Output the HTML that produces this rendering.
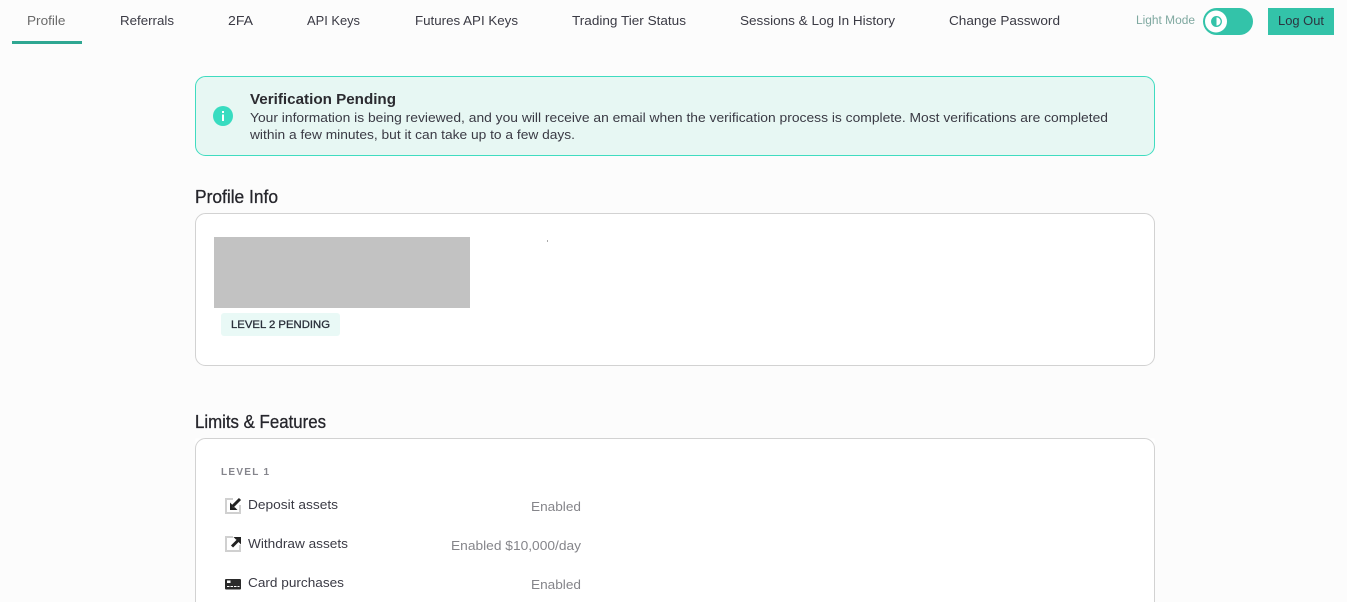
<!DOCTYPE html>
<html lang="en">
<head>
<meta charset="utf-8">
<title>Profile</title>
<style>
html,body{margin:0;padding:0;background:#fcfcfc;width:1347px;height:602px;overflow:hidden}
svg{position:absolute;left:0;top:0;display:block}
text{font-family:"Liberation Sans",sans-serif;fill:#3a3a44}
</style>
</head>
<body>
<svg width="1347" height="602" viewBox="0 0 1347 602" xmlns="http://www.w3.org/2000/svg">
<rect width="1347" height="602" fill="#fcfcfc"/>
<!-- nav -->
<g font-size="13">
<text x="27" y="25" textLength="38.500" lengthAdjust="spacingAndGlyphs" style="fill:#6a6a6a">Profile</text>
<text x="120" y="25" textLength="54" lengthAdjust="spacingAndGlyphs">Referrals</text>
<text x="228" y="25" textLength="25" lengthAdjust="spacingAndGlyphs">2FA</text>
<text x="307" y="25" textLength="53" lengthAdjust="spacingAndGlyphs">API Keys</text>
<text x="415" y="25" textLength="103" lengthAdjust="spacingAndGlyphs">Futures API Keys</text>
<text x="572" y="25" textLength="114" lengthAdjust="spacingAndGlyphs">Trading Tier Status</text>
<text x="740" y="25" textLength="155" lengthAdjust="spacingAndGlyphs">Sessions &amp; Log In History</text>
<text x="949" y="25" textLength="111" lengthAdjust="spacingAndGlyphs">Change Password</text>
</g>
<rect x="12" y="41" width="70" height="3" fill="#2fa792"/>
<text x="1136" y="24" font-size="11.500" textLength="59" lengthAdjust="spacingAndGlyphs" style="fill:#7fa8a0">Light Mode</text>
<rect x="1203" y="8" width="50" height="27" rx="13.500" fill="#33c3a9"/>
<circle cx="1216" cy="21.500" r="11" fill="#fff"/>
<circle cx="1216.500" cy="21.500" r="4.800" fill="#fff" stroke="#33c3a9" stroke-width="1.300"/>
<path d="M1216.500 16.700a4.800 4.800 0 0 0 0 9.600z" fill="#33c3a9"/>
<rect x="1268" y="8" width="66" height="27" fill="#33c3a9"/>
<text x="1278" y="25" font-size="13" textLength="46" lengthAdjust="spacingAndGlyphs" style="fill:#2c3440">Log Out</text>
<!-- alert -->
<rect x="195.500" y="76.500" width="959" height="79" rx="10" fill="#e7f7f3" stroke="#3fdcc0"/>
<circle cx="223" cy="116" r="10" fill="#38dcc0"/>
<rect x="222" y="114.500" width="2" height="6.500" fill="#fff"/>
<rect x="222" y="111" width="2" height="2" fill="#fff"/>
<text x="250" y="104" font-size="15" font-weight="700" textLength="146" lengthAdjust="spacingAndGlyphs" style="fill:#2b2b30">Verification Pending</text>
<text x="250" y="122" font-size="13" textLength="858" lengthAdjust="spacingAndGlyphs">Your information is being reviewed, and you will receive an email when the verification process is complete. Most verifications are completed</text>
<text x="250" y="139" font-size="13" textLength="325" lengthAdjust="spacingAndGlyphs">within a few minutes, but it can take up to a few days.</text>
<!-- profile -->
<text x="195" y="203" font-size="18" textLength="83" lengthAdjust="spacingAndGlyphs" style="fill:#26262c;stroke:#26262c;stroke-width:.3">Profile Info</text>
<rect x="195.500" y="213.500" width="959" height="152" rx="10" fill="#fff" stroke="#d2d2d2"/>
<rect x="214" y="237" width="256" height="71" fill="#c2c2c2"/>
<rect x="547" y="240" width="1" height="2" fill="#aaa"/>
<rect x="221" y="313" width="119" height="23" rx="3" fill="#e9f9f6"/>
<text x="231" y="328" font-size="11" textLength="99" lengthAdjust="spacingAndGlyphs" style="fill:#2a2f3a;stroke:#2a2f3a;stroke-width:.3">LEVEL 2 PENDING</text>
<!-- limits -->
<text x="195" y="428" font-size="18" textLength="131" lengthAdjust="spacingAndGlyphs" style="fill:#26262c;stroke:#26262c;stroke-width:.3">Limits &amp; Features</text>
<rect x="195.500" y="438.500" width="959" height="163.500" fill="#fff"/>
<path d="M195.500 602V448.500a10 10 0 0 1 10-10h939a10 10 0 0 1 10 10V602" fill="#fff" stroke="#d2d2d2"/>
<text x="221" y="475" font-size="10" font-weight="700" textLength="48" lengthAdjust="spacing" style="fill:#85858c">LEVEL 1</text>
<!-- deposit -->
<path d="M233 499H226V513H240V505" fill="none" stroke="#d0d0d0" stroke-width="2"/>
<path d="M240 499L232.500 506.500" stroke="#222" stroke-width="3" fill="none"/>
<path d="M230 502.500V510H237.500L234.800 507.300H232.700V505.200z" fill="#222"/>
<text x="248" y="509" font-size="13" textLength="90" lengthAdjust="spacingAndGlyphs">Deposit assets</text>
<text x="531" y="511" font-size="13" textLength="50" lengthAdjust="spacingAndGlyphs" style="fill:#85858a">Enabled</text>
<!-- withdraw -->
<path d="M233 537H226V551H240V545" fill="none" stroke="#d0d0d0" stroke-width="2"/>
<path d="M232 546.500L238.500 540" stroke="#222" stroke-width="3" fill="none"/>
<path d="M233.500 537H241V544.500L238.300 541.800V539.700H236.200z" fill="#222"/>
<text x="248" y="548" font-size="13" textLength="100" lengthAdjust="spacingAndGlyphs">Withdraw assets</text>
<text x="451" y="550" font-size="13" textLength="130" lengthAdjust="spacingAndGlyphs" style="fill:#85858a">Enabled $10,000/day</text>
<!-- card -->
<rect x="225" y="579" width="16" height="10.500" rx="1" fill="#2a2a2a"/>
<rect x="227" y="580.500" width="3.500" height="2.500" fill="#fff"/>
<path d="M227 586.500h2.500M230.500 586.500h2.500M234 586.500h2.500M237.500 586.500h2" stroke="#fff" stroke-width="1"/>
<text x="248" y="587" font-size="13" textLength="96" lengthAdjust="spacingAndGlyphs">Card purchases</text>
<text x="531" y="589" font-size="13" textLength="50" lengthAdjust="spacingAndGlyphs" style="fill:#85858a">Enabled</text>
</svg>
</body>
</html>
